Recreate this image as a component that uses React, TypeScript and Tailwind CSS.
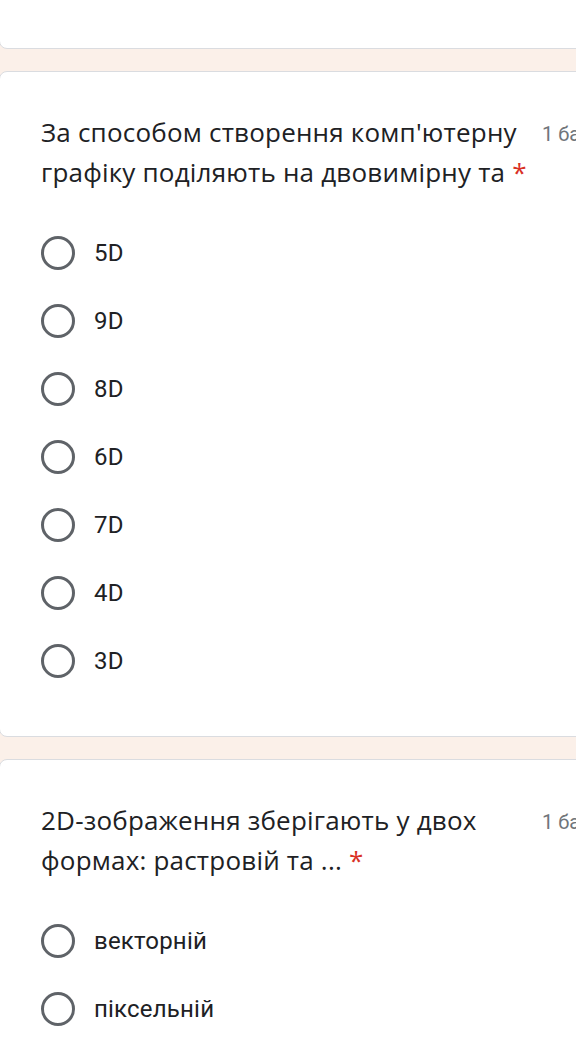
import React from 'react';

type Question = {
  title: string;
  options: string[];
};

const questions: Question[] = [
  {
    title: "За способом створення комп'ютерну графіку поділяють на двовимірну та",
    options: ['5D', '9D', '8D', '6D', '7D', '4D', '3D'],
  },
  {
    title: '2D-зображення зберігають у двох формах: растровій та ...',
    options: ['векторній', 'піксельній'],
  },
];

const Radio: React.FC = () => (
  <span className="w-[34px] h-[34px] shrink-0 rounded-full border-[3px] border-[#5f6368]" />
);

const QuestionCard: React.FC<{ q: Question }> = ({ q }) => (
  <div className="bg-white -ml-px w-[640px] rounded-lg border border-[#dadce0] pl-[41px] pt-10 pb-[41px]">
    <div className="flex items-start">
      <div className="w-[490px] text-[26px] leading-[40px] tracking-[0.2px] text-[#202124] font-['Open_Sans',sans-serif]">
        {q.title} <span className="text-[#d93025]">*</span>
      </div>
      <div className="ml-[11px] pt-[2px] text-[20px] leading-[40px] text-[#70757a] whitespace-nowrap">
        1 бал
      </div>
    </div>
    <div className="mt-[27px] flex flex-col">
      {q.options.map((o) => (
        <div key={o} className="h-[68px] flex items-center gap-[19px]">
          <Radio />
          <span className="text-[24px] tracking-[0.2px] text-[#202124]">{o}</span>
        </div>
      ))}
    </div>
  </div>
);

export default function App() {
  return (
    <div
      className="w-[576px] h-[1056px] overflow-hidden bg-[#fbf0e9]"
      style={{ fontFamily: 'Roboto, "Noto Sans", sans-serif' }}
    >
      <div className="flex flex-col gap-[22px] -mt-[100px]">
        <div className="bg-white -ml-px w-[640px] h-[149px] rounded-lg border border-[#dadce0]" />
        {questions.map((q, i) => (
          <QuestionCard key={i} q={q} />
        ))}
      </div>
    </div>
  );
}
